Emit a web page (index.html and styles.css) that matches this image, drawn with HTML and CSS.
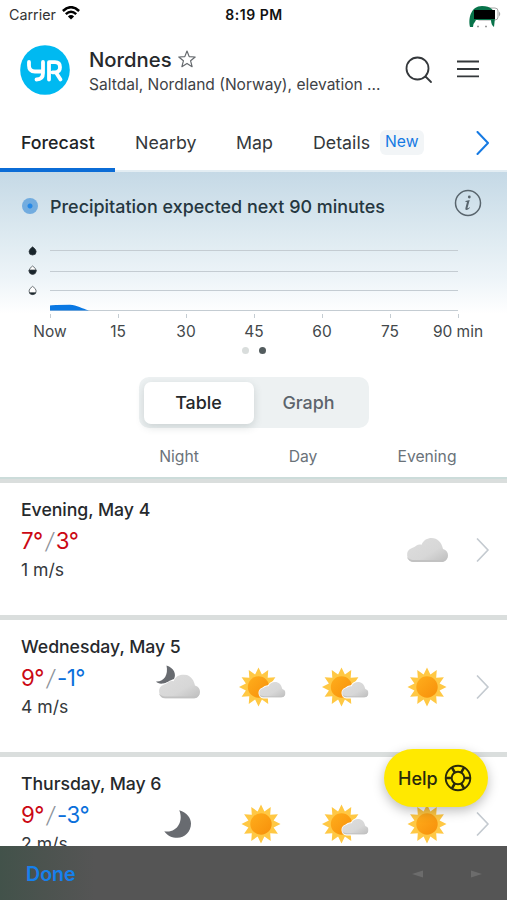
FILE: index.html
```html
<!DOCTYPE html>
<html lang="en">
<head>
<meta charset="utf-8">
<title>Yr – Nordnes</title>
<link rel="stylesheet" href="styles.css">
</head>
<body>
<svg class="sprite" width="0" height="0" aria-hidden="true">
  <defs>
    <linearGradient id="cloudFill" x1="0" y1="0" x2="1" y2="1">
      <stop offset="0" stop-color="#dedede"/><stop offset=".6" stop-color="#d7d7d7"/><stop offset="1" stop-color="#bdbdbd"/>
    </linearGradient>
    <linearGradient id="sunFill" x1="0" y1="0" x2="1" y2="1">
      <stop offset="0" stop-color="#ffae1c"/><stop offset="1" stop-color="#f78f0a"/>
    </linearGradient>
    <symbol id="cloud" viewBox="0 0 42 24">
      <path d="M7.500 24A7.200 7.200 0 0 1 5.500 10.200C8 9 9 8.800 10.500 7.400C12 6.300 14 6.200 15.600 6.700C17.500 2 21.500 0 25.500 0C31.500 0 35.500 4 37 11C40.500 12 42 14.500 42 17.200C42 21 39.200 24 35 24Z" fill="url(#cloudFill)"/>
      <path d="M.8 19C3 21.500 6 22 9 22H36C38.500 22 40.500 20.800 41.500 19.300C40.600 22.200 38.200 24 35 24H7.500C4.500 24 2 22 .8 19Z" fill="#c2c2c2"/>
    </symbol>
    <symbol id="sun" viewBox="-20 -20 40 40">
      <path d="M0-19.500L3.400-12.600L9.750-16.900L9.200-9.200L16.900-9.750L12.600-3.400L19.500 0L12.600 3.400L16.900 9.750L9.200 9.200L9.750 16.900L3.400 12.600L0 19.500L-3.400 12.600L-9.750 16.900L-9.200 9.200L-16.900 9.750L-12.600 3.400L-19.500 0L-12.600-3.400L-16.900-9.750L-9.200-9.200L-9.750-16.900L-3.400-12.600Z" fill="#ffc844"/>
      <circle r="10.700" fill="url(#sunFill)"/>
    </symbol>
    <symbol id="sun-cloud" viewBox="-25 -20 50 40">
      <use href="#sun" x="-22.500" y="-20" width="40" height="40"/>
      <path transform="translate(-2.500 -5)" d="M5 15.500A4.500 4.500 0 0 1 4 6.800C6 5 8 4 9.900 4.500C11.500 1 14 0 17 0C21 0 23 3 24 7C26 8 27 9.500 27 11.500C27 14 25 15.500 22 15.500Z" fill="#fff" stroke="#fff" stroke-width="2"/>
      <use href="#cloud" x="-2.500" y="-5" width="27" height="15.500"/>
    </symbol>
    <symbol id="moon" viewBox="-20 -20 40 40">
      <path d="M1.200-13.800C9-11.500 13-6 13-.5C13 8 6.500 13.800-.5 13.800C-6 13.800-11 11.500-13.700 7.200C-1 9.500 6-3 1.200-13.800Z" fill="#686b70"/>
    </symbol>
    <symbol id="chevron" viewBox="0 0 14 24">
      <path d="M1.500 1L12 12L1.500 23" fill="none" stroke="currentColor" stroke-linecap="round" stroke-linejoin="round"/>
    </symbol>
  </defs>
</svg>
<div class="app">
  <div class="status">
    <div class="carrier"><span>Carrier</span>
      <svg width="18" height="14" viewBox="0 0 18 14"><g fill="none" stroke="#000" stroke-width="2.500"><path d="M.9 5Q9-2.600 17.100 5"/><path d="M3.800 8.200Q9 3.400 14.200 8.200"/></g><path d="M9 13.600L5.900 10.400Q9 7.700 12.100 10.400Z"/></svg>
    </div>
    <div class="clock">8:19 PM</div>
    <svg class="battery" width="34" height="24" viewBox="0 0 34 24"><rect x="8" y="4" width="22" height="12" rx="3" fill="#fff" stroke="#a5a5a5"/><path d="M2 23C0 14 3 2 14 2C23 2 27 6 27 14L26 23Q23 21 23 16H8Q7 18 5.500 20L5 23Z" fill="#08734a"/><rect x="6" y="6" width="21" height="9" fill="#000"/><path d="M31 7.500Q33.500 10 31 12.500Z" fill="#aaa"/><path d="M9 22.500h2M17 22.500h2" stroke="#999" stroke-width="1.300"/></svg>
  </div>
  <header class="header">
    <svg class="logo" width="50" height="50" viewBox="0 0 50 50"><circle cx="25" cy="25" r="24.800" fill="#00b9f1"/><g fill="none" stroke="#fff" stroke-width="3.800" stroke-linecap="round" stroke-linejoin="round"><path d="M9 17V20.500Q9 26.500 15 26.500H23M23 17V28Q23 34.500 16.500 34.500"/><path d="M29 34.500V17.200H35Q40 17.200 40 22.200T35 27.300H32.500M36 27.500L40.500 34.500"/></g></svg>
    <div class="place">
      <div class="name"><span>Nordnes</span><svg width="18" height="18" viewBox="0 0 18 18"><path d="M9 1L11.200 6.600L17.200 7L12.600 10.800L14.100 16.700L9 13.400L3.900 16.700L5.400 10.800L.8 7L6.800 6.600Z" fill="none" stroke="#666a6e" stroke-width="1.200" stroke-linejoin="round"/></svg></div>
      <div class="region">Saltdal, Nordland (Norway), elevation ...</div>
    </div>
    <svg class="search" width="28" height="28" viewBox="0 0 28 28"><g fill="none" stroke="#34383b" stroke-width="1.800" stroke-linecap="round"><circle cx="12.500" cy="12.500" r="11"/><path d="M20.500 20.500L26 26"/></g></svg>
    <svg class="menu" width="24" height="18" viewBox="0 0 24 18"><path d="M1 1.500H23M1 9H23M1 16.300H23" stroke="#34383b" stroke-width="1.800"/></svg>
  </header>
  <nav class="tabs">
    <a class="tab active">Forecast</a><a class="tab nearby">Nearby</a><a class="tab map">Map</a><a class="tab details">Details</a><span class="new">New</span>
    <svg class="more" width="14" height="24"><use href="#chevron"/></svg>
  </nav>
  <main>
    <section class="rain">
      <div class="rain-head">
        <span class="pulse"></span><h2>Precipitation expected next 90 minutes</h2>
        <svg class="info" width="28" height="28" viewBox="0 0 28 28"><circle cx="14" cy="14" r="12.500" fill="none" stroke="#59656d" stroke-width="1.500"/><g fill="#59656d"><circle cx="15.300" cy="8" r="1.400"/><path d="M11.500 12L15.700 11L13.500 19Q13.600 19.800 15.700 18.200L16 18.700Q13.500 21.300 12 20.900Q10.900 20.400 11.500 18.700L13 13L11.300 12.700Z"/></g></svg>
      </div>
      <svg class="chart" width="507" height="80" viewBox="0 240 507 80">
        <g stroke="#c4ccd2" stroke-width="1"><path d="M50 250.500H458M50 271.500H458M50 290.500H458M50 310.500H458"/><path d="M50.500 314v4M118.500 314v4M186.500 314v4M254.500 314v4M322.500 314v4M390.500 314v4M458.500 314v4"/></g>
        <path d="M50 310.500V305.500Q52 304.700 70 304.700C77 305 82 308.500 89 310.500Z" fill="#0a78e3"/>
        <g stroke="#343c42" stroke-width=".7"><path d="M32.600 246.800Q36.200 249.500 36.200 251.500A3.600 3.600 0 0 1 29 251.500Q29 249.500 32.600 246.800Z" fill="#18242b"/><path d="M32.600 266Q36.200 268.500 36.200 270.700A3.600 3.600 0 0 1 29 270.700Q29 268.500 32.600 266Z" fill="#fff"/><path d="M29 270H36.200Q36 274.300 32.600 274.300T29 270Z" fill="#18242b"/><path d="M32.600 286.300Q36.200 288.800 36.200 291A3.600 3.600 0 0 1 29 291Q29 288.800 32.600 286.300Z" fill="#fff"/><path d="M29.500 292.700H35.700Q35 294.500 32.600 294.500T29.500 292.700Z" fill="#18242b"/></g>
      </svg>
      <div class="axis"><span>Now</span><span>15</span><span>30</span><span>45</span><span>60</span><span>75</span><span>90 min</span></div>
      <div class="pager"><i></i><i class="on"></i></div>
    </section>
    <div class="switch"><span class="selected">Table</span><span>Graph</span></div>
    <div class="periods"><span>Night</span><span>Day</span><span>Evening</span></div>
    <section class="days">
      <article class="day">
        <h3>Evening, May 4</h3>
        <div class="body">
          <div class="facts"><div class="temp"><b class="warm">7°</b><i>/</i><b class="warm">3°</b></div><div class="wind">1 m/s</div></div>
          <div class="icons"><span></span><span></span><span></span><svg width="42" height="24"><use href="#cloud"/></svg></div>
          <svg class="go" width="14" height="24"><use href="#chevron"/></svg>
        </div>
      </article>
      <article class="day">
        <h3>Wednesday, May 5</h3>
        <div class="body">
          <div class="facts"><div class="temp"><b class="warm">9°</b><i>/</i><b class="cold">-1°</b></div><div class="wind">4 m/s</div></div>
          <div class="icons">
            <svg class="night" width="50" height="40" viewBox="-25 -20 50 40">
              <path d="M-11.500-21.500C-4-19-1.500-13-4-8C-8-7-12-3.500-15-3.500C-18-3-20.500-3.800-22-5.500C-14-5-9.500-12-11.500-21.500Z" fill="#686b70"/>
              <use href="#cloud" x="-20" y="-12.500" width="42" height="24"/>
            </svg>
            <svg width="50" height="40"><use href="#sun-cloud"/></svg><svg width="50" height="40"><use href="#sun-cloud"/></svg><svg width="40" height="40"><use href="#sun"/></svg></div>
          <svg class="go" width="14" height="24"><use href="#chevron"/></svg>
        </div>
      </article>
      <article class="day">
        <h3>Thursday, May 6</h3>
        <div class="body">
          <div class="facts"><div class="temp"><b class="warm">9°</b><i>/</i><b class="cold">-3°</b></div><div class="wind">2 m/s</div></div>
          <div class="icons"><svg width="40" height="40"><use href="#moon"/></svg><svg width="40" height="40"><use href="#sun"/></svg><svg width="50" height="40"><use href="#sun-cloud"/></svg><svg width="40" height="40"><use href="#sun"/></svg></div>
          <svg class="go" width="14" height="24"><use href="#chevron"/></svg>
        </div>
      </article>
    </section>
  </main>
  <footer class="toolbar"><span>Done</span><svg width="70" height="8" viewBox="0 0 70 8"><path d="M0 4L11 .5V7.500ZM70 4L59 .5V7.500Z" fill="#6c6c6c"/></svg></footer>
  <button class="help"><span>Help</span><svg width="28" height="28" viewBox="0 0 28 28"><g fill="none" stroke="#29290b" stroke-width="1.900"><circle cx="14" cy="14" r="12.300"/><circle cx="14" cy="14" r="6.300"/><path d="M1.700 14H7.700M20.300 14H26.300M10.850 8.540L7.850 3.350M17.150 8.540L20.150 3.350M10.850 19.460L7.850 24.650M17.150 19.460L20.150 24.650" stroke-width="2.600"/></g></svg></button>
</div>
</body>
</html>
```
FILE: styles.css
```css
* { box-sizing: border-box; }
body { margin: 0; background: #fff; font-family: Inter, "Liberation Sans", sans-serif; color: #26292c; }
svg { display: block; flex: none; }
.sprite { position: absolute; }
.app { position: relative; display: flex; flex-direction: column; width: 507px; height: 900px; overflow: hidden; }
.status { display: grid; grid-template-columns: 1fr 1fr 1fr; align-items: center; height: 27px; padding-left: 6px; padding-right: 5px; flex: none; }
.carrier { display: flex; align-items: center; gap: 6px; padding-left: 3px; font-size: 14.300px; color: #333; }
.carrier svg { margin-top: -2px; }
.clock { text-align: center; font-size: 14px; letter-spacing: .5px; font-weight: 600; color: #111; }
.battery { justify-self: end; margin-top: 4px; }
.header { display: flex; height: 86px; padding: 1px 26px 0 20px; flex: none; }
.logo { margin-top: 17px; }
.place { width: 296px; margin-left: 19px; padding-top: 18px; }
.name { display: flex; align-items: center; gap: 6px; height: 26px; font-size: 20.300px; font-weight: 500; }
.region { height: 24px; line-height: 25px; font-size: 15.550px; white-space: nowrap; color: #3e4246; }
.search { margin: 28px 0 0 20px; }
.menu { margin: 32px 0 0 23px; }
.tabs { display: flex; height: 59px; flex: none; align-items: flex-start; border-bottom: 2px solid #e3edf3; font-size: 17.800px; color: #34383b; }
.tab { height: 59px; line-height: 59px; }
.active { width: 115px; padding-left: 21px; border-bottom: 4px solid #0b6cd6; font-weight: 500; color: #202326; }
.nearby { margin-left: 20px; width: 101px; }
.map { width: 77px; }
.details { width: 67px; }
.new { height: 25px; margin-top: 17px; padding: 0 5px; line-height: 23px; border-radius: 6px; background: #f2f5f7; color: #167ae3; font-size: 15.700px; }
.more { margin: 18px 17px 0 auto; color: #167ae3; stroke-width: 2; }
main { flex: 1; min-height: 0; overflow: hidden; }
.rain { height: 205px; background: linear-gradient(#c5d9e6 0, #dce9f0 60px, #edf4f8 105px, #fff 142px); }
.rain-head { display: flex; align-items: center; height: 68px; padding: 0 25px 0 22px; }
.pulse { width: 16px; height: 16px; border-radius: 50%; background: radial-gradient(circle, #2488e7 0 2px, #72acdf 3px); }
h2 { margin: 0 0 0 12px; font-size: 17.950px; font-weight: 500; color: #253740; white-space: nowrap; }
.info { margin: -6px 0 0 auto; }
.chart { width: 507px; }
.axis { display: flex; width: 476px; margin-left: 16px; height: 22px; line-height: 24px; font-size: 15.500px; color: #43484b; }
.axis span { width: 68px; text-align: center; flex: none; white-space: nowrap; }
.pager { display: flex; justify-content: center; gap: 10px; padding-top: 5px; }
.pager i { width: 7px; height: 7px; border-radius: 50%; background: #d9dddc; }
.pager .on { background: #535c5e; }
.switch { display: grid; grid-template-columns: 110px 110px; width: 230px; height: 51px; margin: 0 auto; padding: 5px; border-radius: 10px; background: #edf1f2; text-align: center; font-size: 17.900px; line-height: 42px; color: #5c646c; font-weight: 500; }
.selected { height: 42px; border-radius: 7px; background: #fff; color: #24282b; box-shadow: 0 3px 9px rgba(50, 70, 70, .18); }
.periods { display: grid; grid-template-columns: repeat(3, 124px); height: 49px; padding-left: 117px; text-align: center; line-height: 57px; font-size: 15.700px; color: #6a7279; }
.days { border-top: 2px solid #ccdcda; background: #dadedd; padding-top: 4px; display: grid; gap: 5px; }
.day { height: 132px; padding: 15px 17px 0 21px; background: #fff; }
h3 { margin: 0; height: 24px; line-height: 24px; font-size: 17.700px; font-weight: 500; letter-spacing: -.05px; }
.body { display: flex; }
.facts { width: 115px; padding-top: 4px; }
.temp { display: flex; height: 30px; line-height: 29px; font-size: 22.300px; letter-spacing: -.5px; }
.temp b { font-weight: 400; }
.temp i { width: 13px; text-align: center; font-weight: 300; color: #8c9299; }
.warm { color: #cb0814; }
.cold { color: #0b70db; }
.wind { height: 28px; line-height: 28px; font-size: 17.600px; color: #34383b; }
.icons { display: grid; grid-template-columns: repeat(4, 83px); height: 40px; margin-top: 8px; place-items: center; }
.night { overflow: visible; }
.go { margin: 16px 0 0 auto; color: #c4cad0; stroke-width: 1.700; }
.toolbar { height: 54px; flex: none; display: flex; align-items: center; justify-content: space-between; padding: 1px 25px 0 26px; background: linear-gradient(90deg, #42524a 0, #4c534f 45px, #555 95px); color: #1680ed; font-size: 19.600px; font-weight: 600; }
.help { position: absolute; left: 384px; top: 749px; width: 104px; height: 58px; border: 0; border-radius: 29px; padding: 0 16px 0 14px; display: flex; align-items: center; justify-content: space-between; background: #ffe900; color: #29290b; font: 500 18px Inter, sans-serif; box-shadow: 0 4px 12px rgba(0, 0, 0, .26); }
```
